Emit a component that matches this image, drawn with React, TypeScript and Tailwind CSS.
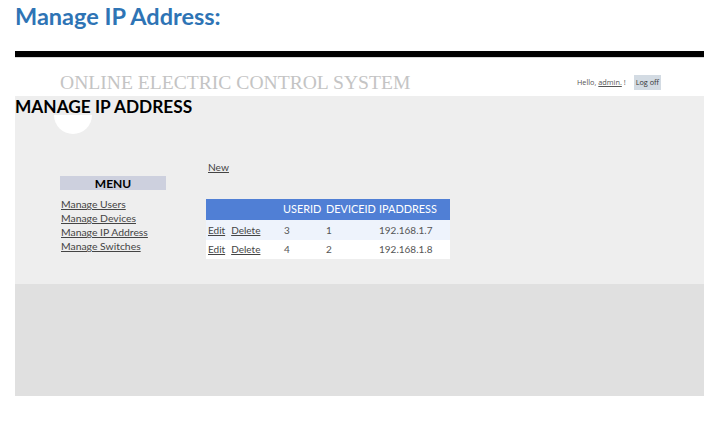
const menuLinks = ['Manage Users', 'Manage Devices', 'Manage IP Address', 'Manage Switches'];

const rows = [
  { userId: 3, deviceId: 1, ip: '192.168.1.7' },
  { userId: 4, deviceId: 2, ip: '192.168.1.8' },
];

export default function App() {
  return (
    <div className="w-[719px] h-[426px] bg-white px-[15px] overflow-hidden font-['Lato',sans-serif]">
      {/* Document heading */}
      <h2 className="pt-[2px] h-[51px] text-[23.5px] font-bold leading-[28px] text-[#2e74b5]">
        Manage IP Address:
      </h2>
      <div className="h-[6px] bg-black" />
      <div className="h-px bg-[#d8d8d8]" />

      {/* Screenshot of the page */}
      <div className="flex items-end justify-between h-[38px] pl-[45px] pr-[43px] pb-[3px]">
        <div className="font-['Liberation_Serif',serif] text-[19.6px] leading-[20px] text-[#c4c4c4]">
          ONLINE ELECTRIC CONTROL SYSTEM
        </div>
        <div className="flex items-center gap-[8px] mb-[3px] text-[7.3px] text-[#555] font-['Open_Sans',sans-serif]">
          <span>
            Hello, <span className="underline">admin.</span> !
          </span>
          <span className="bg-[#d3dbe3] px-[2px] h-[15px] flex items-center text-[#333]">Log off</span>
        </div>
      </div>

      <div className="h-[188px] bg-[#eeeeee]">
        <h1 className="h-[19px] pt-[2px] text-[17.3px] font-bold leading-[18px] text-black">
          MANAGE IP ADDRESS
        </h1>
        <div className="ml-[39px] w-[38px] h-[19px] rounded-b-full bg-white" />

        <div className="flex items-start">
          {/* Menu */}
          <div className="ml-[45px] w-[106px] pt-[42px]">
            <div className="h-[14px] bg-[#cdd0de] text-center text-[12px] font-bold leading-[15px] text-black">
              MENU
            </div>
            <ul className="mt-[7px] pl-px text-[10.4px] leading-[14px] text-[#444]">
              {menuLinks.map((l) => (
                <li key={l}>
                  <a className="underline">{l}</a>
                </li>
              ))}
            </ul>
          </div>

          {/* Main */}
          <div className="ml-[40px] pt-[26px]">
            <a className="block ml-[2px] text-[10.2px] leading-[14px] text-[#444] underline">New</a>
            <table className="mt-[25px] w-[244px] table-fixed border-collapse text-[10px] text-[#555]">
              <colgroup>
                <col className="w-[77px]" />
                <col className="w-[43px]" />
                <col className="w-[53px]" />
                <col className="w-[71px]" />
              </colgroup>
              <thead>
                <tr className="h-[21px] bg-[#507fd5] text-white text-[10.9px]">
                  <th />
                  <th className="text-left font-normal">USERID</th>
                  <th className="text-left font-normal">DEVICEID</th>
                  <th className="text-left font-normal">IPADDRESS</th>
                </tr>
              </thead>
              <tbody>
                {rows.map((r, i) => (
                  <tr key={r.ip} className={i === 0 ? 'h-[20px] bg-[#eef3fc]' : 'h-[19px] bg-white'}>
                    <td className="pl-[2px] text-[#444] whitespace-nowrap">
                      <a className="underline">Edit</a>
                      <a className="underline ml-[6px]">Delete</a>
                    </td>
                    <td className="pl-px">{r.userId}</td>
                    <td>{r.deviceId}</td>
                    <td>{r.ip}</td>
                  </tr>
                ))}
              </tbody>
            </table>
          </div>
        </div>
      </div>
      <div className="h-[112px] bg-[#e0e0e0]" />
    </div>
  );
}
